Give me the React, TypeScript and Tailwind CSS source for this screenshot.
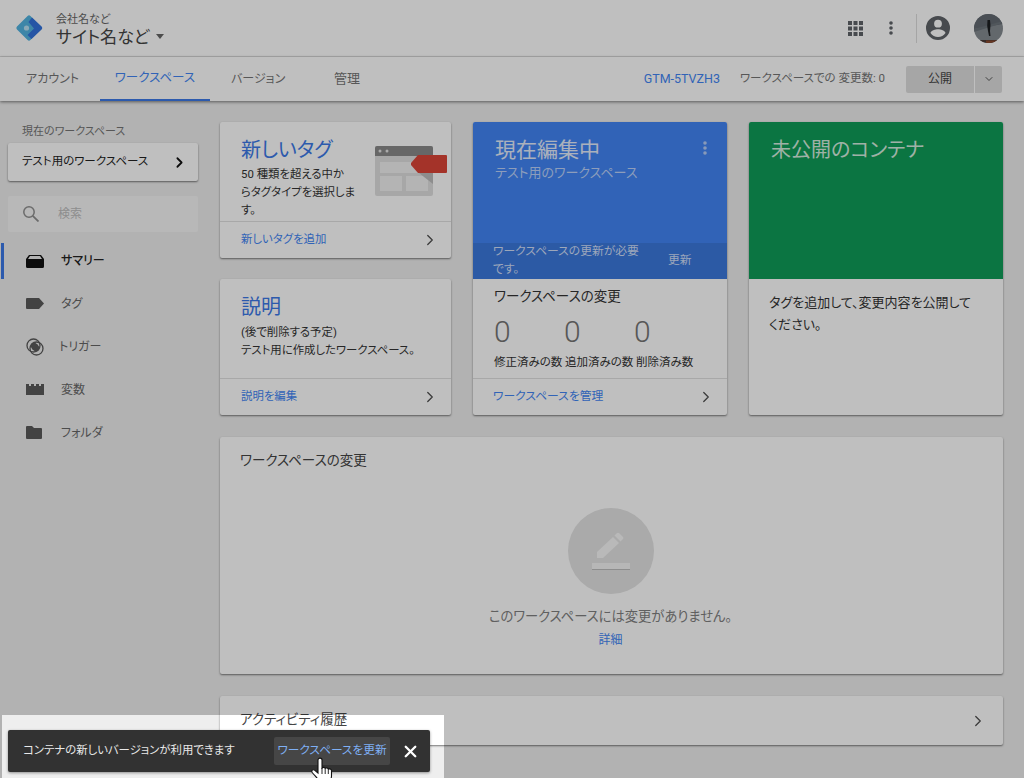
import React from "react";
import { ChevronRight, ChevronDown, X } from "lucide-react";

const FONT = "font-['Roboto','Noto_Sans_CJK_JP',sans-serif] [font-feature-settings:'palt']";

const Logo = () => (
  <svg width="28" height="28" viewBox="0 0 28 28">
    <rect x="4.500" y="4.500" width="19" height="19" rx="2" transform="rotate(45 14 14)" fill="#52b3e0" />
    <path d="M17 3.500 L26.800 12.800 Q27.800 14 26.800 15.200 L16.500 25 L12.500 21 L19 14.500 L13.500 8 Z" fill="#3272dc" />
    <circle cx="11.500" cy="14" r="2.600" fill="#b9e2f5" />
  </svg>
);

const AppsIcon = () => (
  <svg width="15" height="15" viewBox="0 0 15 15" fill="#5f6368">
    <rect x="0" y="0" width="4" height="4" />
    <rect x="5.500" y="0" width="4" height="4" />
    <rect x="11" y="0" width="4" height="4" />
    <rect x="0" y="5.500" width="4" height="4" />
    <rect x="5.500" y="5.500" width="4" height="4" />
    <rect x="11" y="5.500" width="4" height="4" />
    <rect x="0" y="11" width="4" height="4" />
    <rect x="5.500" y="11" width="4" height="4" />
    <rect x="11" y="11" width="4" height="4" />
  </svg>
);

const DotsIcon = ({ color = "#5f6368" }: { color?: string }) => (
  <svg width="4" height="14" viewBox="0 0 4 14" fill={color}>
    <circle cx="2" cy="2" r="1.800" />
    <circle cx="2" cy="7" r="1.800" />
    <circle cx="2" cy="12" r="1.800" />
  </svg>
);

const AccountIcon = () => (
  <svg width="24" height="24" viewBox="0 0 24 24" fill="#5f6368">
    <path d="M12 0a12 12 0 1 0 0 24 12 12 0 0 0 0-24zm0 3.800a3.900 3.900 0 1 1 0 7.800 3.900 3.900 0 0 1 0-7.800zm0 17.200a9.300 9.300 0 0 1-7.500-3.900c.1-2.500 5-3.800 7.500-3.800s7.400 1.300 7.500 3.800A9.300 9.300 0 0 1 12 21z" />
  </svg>
);

const Avatar = () => (
  <svg width="29" height="29" viewBox="0 0 29 29">
    <defs>
      <clipPath id="avatar-clip">
        <circle cx="14.500" cy="14.500" r="14.500" />
      </clipPath>
    </defs>
    <g clipPath="url(#avatar-clip)">
      <rect width="29" height="29" fill="#858b91" />
      <path d="M0 0h29v10L0 15z" fill="#636a72" />
      <path d="M0 15 L29 7 V9 L0 18 Z" fill="#6d747b" />
      <path d="M0 26 H29 V29 H0 Z" fill="#4a3a36" />
      <path d="M12 26.500 H24 V29 H12 Z" fill="#8a4a2e" />
      <path d="M13.500 6h2.500l.5 5-.5 6 .5 5h-1.500l-1-5-.8-5z" fill="#1d1f22" />
    </g>
  </svg>
);

const SearchGlyph = () => (
  <svg width="16" height="16" viewBox="0 0 16 16" fill="none" stroke="#8f8f8f" strokeWidth="1.500">
    <circle cx="6" cy="6" r="5.200" />
    <path d="M9.800 9.800 L15.500 15.500" strokeWidth="1.800" />
  </svg>
);

const SummaryIcon = () => (
  <svg width="18" height="14" viewBox="0 0 18 14">
    <path d="M3 1h12l3 4v7.500a1.500 1.500 0 0 1-1.500 1.500h-15A1.500 1.500 0 0 1 0 12.500V5z" fill="#111" />
    <path d="M4 2h10l2 3H2z" fill="#eee" />
  </svg>
);

const TagIcon = () => (
  <svg width="18" height="11" viewBox="0 0 18 11" fill="#5a5a5a">
    <path d="M0 1a1 1 0 0 1 1-1h12l5 5.500-5 5.500H1a1 1 0 0 1-1-1z" />
  </svg>
);

const TriggerIcon = () => (
  <svg width="18" height="18" viewBox="0 0 18 18" fill="none" stroke="#5a5a5a" strokeWidth="1.300">
    <circle cx="7.500" cy="7.500" r="6.500" />
    <circle cx="10.500" cy="10.500" r="6.500" />
    <path d="M7 4.500A6.500 6.500 0 0 1 13.500 11 6.500 6.500 0 0 1 11 13.500 6.500 6.500 0 0 1 4.500 7 6.500 6.500 0 0 1 7 4.500z" fill="#5a5a5a" stroke="none" />
  </svg>
);

const VariableIcon = () => (
  <svg width="18" height="11" viewBox="0 0 18 11" fill="#5a5a5a">
    <path d="M0 0h3v2h2V0h3v2h2V0h3v2h2V0h3v11H0z" />
  </svg>
);

const FolderIcon = () => (
  <svg width="16" height="13" viewBox="0 0 16 13" fill="#5a5a5a">
    <path d="M1 0h5l2 2h7a1 1 0 0 1 1 1v9a1 1 0 0 1-1 1H1a1 1 0 0 1-1-1V1a1 1 0 0 1 1-1z" />
  </svg>
);

const TagArt = () => (
  <svg width="72" height="52" viewBox="0 0 72 52">
    <rect x="0" y="1" width="58" height="50" rx="2" fill="#dfdfdf" />
    <path d="M0 3a2 2 0 0 1 2-2h54a2 2 0 0 1 2 2v8H0z" fill="#8a8a8a" />
    <circle cx="5" cy="6" r="1.500" fill="#e5e5e5" />
    <circle cx="12" cy="6" r="1.500" fill="#e5e5e5" />
    <rect x="5" y="17" width="48" height="11" fill="#f1f1f1" />
    <rect x="5" y="31" width="22" height="15" fill="#f1f1f1" />
    <rect x="31" y="31" width="22" height="15" fill="#f1f1f1" />
    <path d="M44 28 L58 28 V39 Z" fill="#bdbdbd" />
    <path d="M43 10 H71 a1 1 0 0 1 1 1 V27 a1 1 0 0 1-1 1 H43 L36 20 V18 Z" fill="#db4437" />
  </svg>
);

const EditIcon = () => (
  <svg width="38" height="38" viewBox="0 0 38 38">
    <path d="M5 20 L21 5 L27 11 L11 26 L5 26 Z" fill="#f7f7f7" />
    <path d="M22.500 3.500 L25 1 Q26 .3 27 1 L31 5 Q31.700 6 31 7 L28.500 9.500 Z" fill="#f7f7f7" />
    <rect x="0" y="31" width="38" height="6" fill="#f5f5f5" />
    <rect x="0" y="37" width="38" height="1" fill="#bcbcbc" />
  </svg>
);

const HandCursor = () => (
  <svg width="23" height="24" viewBox="0 0 23 24">
    <path
      d="M7 3c0-2.500 4-2.500 4 0v8c1-1 2.800-.8 3.200.4 1-.8 2.800-.4 3.100.8 1-.6 3.200-.2 3.200 1.600V19c0 2-.8 3-1 5H8c-1-2.500-4-5-6.800-8.500-1.200-1.800.8-3.500 2.300-2.400L7 16z"
      fill="#fff"
      stroke="#111"
      strokeWidth="1.100"
    />
    <path d="M11 11v6M14.200 11.500v5.500M17.300 12.500v4.500" stroke="#111" strokeWidth="0.900" fill="none" />
  </svg>
);

const Card = ({ className = "", children }: { className?: string; children: React.ReactNode }) => (
  <div className={`bg-white rounded-[2px] shadow-[0_1px_2px_rgba(0,0,0,0.5)] overflow-hidden ${className}`}>{children}</div>
);

const CardFooter = ({ label, pad = "pl-[21px]", size = "text-[11.400px]" }: { label: string; pad?: string; size?: string }) => (
  <div className={`h-[37px] shrink-0 border-t border-[#e0e0e0] flex items-center justify-between pr-[12px] ${pad}`}>
    <span className={`${size} text-[#4285f4]`}>{label}</span>
    <ChevronRight size={18} strokeWidth={1.800} className="text-[#555]" />
  </div>
);

const NavItem = ({ icon, label, active, labelClass = "" }: { icon: React.ReactNode; label: string; active?: boolean; labelClass?: string }) => (
  <div className="relative h-[43px] flex items-center pl-[26px]">
    {active && <div className="absolute left-[1px] top-[4px] w-[3px] h-[36px] bg-[#3b78e7]" />}
    <div className="w-[35px] shrink-0 flex items-center">{icon}</div>
    <span className={`text-[12px] ${active ? "text-[#222] font-medium" : "text-[#666]"} ${labelClass}`}>{label}</span>
  </div>
);

const Tab = ({ label, className }: { label: string; className: string }) => (
  <div className={`h-full flex items-center text-[#757575] ${className}`}>{label}</div>
);

export default function App() {
  return (
    <div className={`relative w-[1024px] h-[778px] overflow-hidden bg-[#eeeeee] flex flex-col ${FONT}`}>
      {/* Header */}
      <header className="h-[57px] shrink-0 bg-white border-b border-[#e4e4e4] flex items-center pl-[15px] pr-[21px]">
        <Logo />
        <div className="ml-[13px] mt-[4px] flex flex-col">
          <span className="text-[11px] leading-[13px] text-[#666]">会社名など</span>
          <span className="text-[17px] leading-[22px] text-[#444] flex items-center">
            サイト名など
            <span className="ml-[6px] w-0 h-0 border-x-[4.500px] border-x-transparent border-t-[5px] border-t-[#666]" />
          </span>
        </div>
        <div className="ml-auto flex items-center">
          <AppsIcon />
          <div className="ml-[26px]">
            <DotsIcon />
          </div>
          <div className="ml-[23px] w-px h-[29px] bg-[#dcdcdc]" />
          <div className="ml-[9px]">
            <AccountIcon />
          </div>
          <div className="ml-[24px]">
            <Avatar />
          </div>
        </div>
      </header>

      {/* Tabs */}
      <nav className="h-[44px] shrink-0 bg-white shadow-[0_1px_3px_rgba(0,0,0,0.5)] z-10 flex items-center pl-[26px] pr-[22px]">
        <Tab label="アカウント" className="w-[74px] text-[12px]" />
        <div className="h-full w-[110px] flex items-center justify-center text-[12.500px] text-[#4285f4] border-b-2 border-[#3b78e7]">
          ワークスペース
        </div>
        <Tab label="バージョン" className="ml-[21px] w-[103px] text-[12px]" />
        <Tab label="管理" className="text-[13px]" />
        <div className="ml-auto flex items-center">
          <span className="text-[12.500px] text-[#4285f4]">GTM-5TVZH3</span>
          <span className="ml-[20px] text-[11.500px] text-[#757575]">ワークスペースでの 変更数: 0</span>
          <div className="ml-[21px] w-[68px] h-[27px] bg-[#dedede] rounded-l-[2px] flex items-center justify-center text-[12px] text-[#444]">
            公開
          </div>
          <div className="ml-px w-[27px] h-[27px] bg-[#dedede] rounded-r-[2px] flex items-center justify-center">
            <ChevronDown size={12} className="text-[#555]" />
          </div>
        </div>
      </nav>

      <div className="flex-1 flex min-h-0">
        {/* Sidebar */}
        <aside className="w-[220px] shrink-0 pt-[23px]">
          <div className="pl-[22px] text-[11px] leading-[16px] text-[#757575]">現在のワークスペース</div>
          <div className="mt-[3px] ml-[8px] w-[190px] h-[38px] bg-white rounded-[2px] shadow-[0_1px_2px_rgba(0,0,0,0.5)] flex items-center justify-between pl-[14px] pr-[10px]">
            <span className="text-[11.500px] text-[#222]">テスト用のワークスペース</span>
            <ChevronRight size={17} strokeWidth={2.500} className="text-[#111]" />
          </div>
          <div className="mt-[15px] ml-[8px] w-[190px] h-[36px] bg-[#f6f6f6] rounded-[2px] flex items-center pl-[15px]">
            <SearchGlyph />
            <span className="ml-[19px] text-[12px] text-[#bdbdbd]">検索</span>
          </div>
          <div className="mt-[7px]">
            <NavItem icon={<SummaryIcon />} label="サマリー" active />
            <NavItem icon={<TagIcon />} label="タグ" />
            <NavItem icon={<TriggerIcon />} label="トリガー" labelClass="-ml-[2px]" />
            <NavItem icon={<VariableIcon />} label="変数" />
            <NavItem icon={<FolderIcon />} label="フォルダ" />
          </div>
        </aside>

        {/* Main */}
        <main className="w-[783px] pt-[21px] flex flex-col gap-[22px]">
          <div className="grid grid-cols-[231px_254px_254px] gap-x-[22px] h-[293px]">
            <div className="flex flex-col gap-[21px]">
              <Card className="h-[136px] flex flex-col">
                <div className="flex-1 flex pl-[21px] pt-[14px]">
                  <div className="w-[112px]">
                    <div className="text-[20px] leading-[28px] text-[#3b78e7]">新しいタグ</div>
                    <p className="mt-[1px] text-[11.400px] leading-[18px] text-[#333] whitespace-nowrap">
                      50 種類を超える中か
                      <br />
                      らタグタイプを選択しま
                      <br />
                      す。
                    </p>
                  </div>
                  <div className="ml-[22px] mt-[9px]">
                    <TagArt />
                  </div>
                </div>
                <CardFooter label="新しいタグを追加" />
              </Card>
              <Card className="h-[136px] flex flex-col">
                <div className="flex-1 pl-[21px] pt-[14px]">
                  <div className="text-[20px] leading-[28px] text-[#3b78e7]">説明</div>
                  <p className="mt-[2px] text-[11.400px] leading-[18px] text-[#333]">
                    (後で削除する予定)
                    <br />
                    テスト用に作成したワークスペース。
                  </p>
                </div>
                <CardFooter label="説明を編集" />
              </Card>
            </div>

            <Card className="flex flex-col">
              <div className="h-[157px] shrink-0 bg-[#4285f4] flex flex-col">
                <div className="flex-1 pl-[22px] pr-[20px] pt-[14px] relative">
                  <div className="text-[21px] leading-[28px] text-[#e4ecfb]">現在編集中</div>
                  <div className="text-[13px] leading-[18px] text-[#bcd2fa]">テスト用のワークスペース</div>
                  <div className="absolute right-[20px] top-[19px]">
                    <DotsIcon color="#b5cdf7" />
                  </div>
                </div>
                <div className="h-[36px] shrink-0 bg-[#3b78dd] flex items-center pl-[20px] pb-[2px] text-[11.800px] leading-[18px] text-[#d0dff9]">
                  <span className="w-[152px]">ワークスペースの更新が必要です。</span>
                  <span className="ml-[23px]">更新</span>
                </div>
              </div>
              <div className="flex-1 pl-[21px] pt-[8px]">
                <div className="text-[13.500px] leading-[18px] text-[#333]">ワークスペースの変更</div>
                <div className="mt-[11px] flex text-[30px] leading-[32px] font-light text-[#757575]">
                  <span className="w-[70px]">0</span>
                  <span className="w-[70px]">0</span>
                  <span className="w-[70px]">0</span>
                </div>
                <div className="mt-[6px] flex text-[11.500px] leading-[16px] text-[#333] whitespace-nowrap">
                  <span className="w-[71px]">修正済みの数</span>
                  <span className="w-[71px]">追加済みの数</span>
                  <span>削除済み数</span>
                </div>
              </div>
              <CardFooter label="ワークスペースを管理" pad="pl-[20px]" size="text-[11.800px]" />
            </Card>

            <Card className="flex flex-col">
              <div className="h-[157px] shrink-0 bg-[#0f9d58] pl-[22px] pt-[14px]">
                <div className="text-[20px] leading-[28px] text-[#d5ecdf]">未公開のコンテナ</div>
              </div>
              <p className="pl-[20px] pr-[24px] pt-[13px] text-[13px] leading-[22px] text-[#333]">
                タグを追加して、変更内容を公開してください。
              </p>
            </Card>
          </div>

          <Card className="h-[237px] flex flex-col items-center pt-[13px]">
            <div className="self-start pl-[20px] text-[13.500px] leading-[20px] text-[#444]">ワークスペースの変更</div>
            <div className="mt-[38px] mr-[2px] w-[86px] h-[86px] rounded-full bg-[#e3e3e3] flex items-center justify-center">
              <EditIcon />
            </div>
            <div className="mt-[13px] mr-[2px] text-[13.300px] leading-[20px] text-[#808080]">このワークスペースには変更がありません。</div>
            <div className="mt-[4px] mr-[2px] text-[12px] leading-[18px] text-[#4285f4]">詳細</div>
          </Card>

          <Card className="h-[49px] shrink-0 flex items-center justify-between pl-[20px] pr-[16px]">
            <span className="pb-[2px] text-[13.500px] text-[#444]">アクティビティ履歴</span>
            <ChevronRight size={18} strokeWidth={1.800} className="text-[#555]" />
          </Card>
        </main>
      </div>

      {/* Tour overlay with a spotlight around the snackbar */}
      <div className="absolute left-[2px] top-[715px] w-[442px] h-[63px] z-20 shadow-[0_0_0_2000px_rgba(0,0,0,0.25)]" />

      {/* Snackbar */}
      <div className="absolute left-[8px] top-[730px] z-30 w-[422px] h-[42px] bg-[#323232] rounded-[2px] shadow-[0_1px_3px_rgba(0,0,0,0.4)] flex items-center pl-[15px]">
        <span className="text-[11.400px] text-[#e8e8e8] w-[251px] whitespace-nowrap">コンテナの新しいバージョンが利用できます</span>
        <div className="w-[116px] h-[28px] bg-[#464646] rounded-[2px] flex items-center justify-center text-[11.700px] text-[#7fb0f5] whitespace-nowrap">
          ワークスペースを更新
        </div>
        <X size={19} strokeWidth={3} className="ml-[11px] text-white" />
      </div>

      <div className="absolute left-[311px] top-[757px] z-40">
        <HandCursor />
      </div>
    </div>
  );
}
